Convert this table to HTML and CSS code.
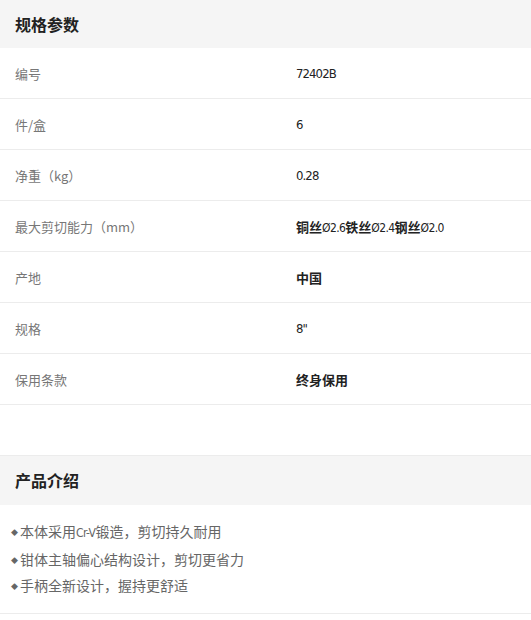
FILE: index.html
```html
<!DOCTYPE html>
<html lang="zh-CN">
<head>
    <meta charset="UTF-8">
    <meta name="viewport" content="width=device-width, initial-scale=1.0">
    <title>规格参数</title>
    <link rel="stylesheet" href="styles.css">
</head>
<body>
    <div class="section">
        <h3 class="section-title">规格参数</h3>
        <div class="spec-list">
            <div class="spec-row">
                <span class="spec-label">编号</span>
                <span class="spec-value num big">72402B</span>
            </div>
            <div class="spec-row">
                <span class="spec-label">件/盒</span>
                <span class="spec-value num big">6</span>
            </div>
            <div class="spec-row">
                <span class="spec-label">净重（kg）</span>
                <span class="spec-value num big">0.28</span>
            </div>
            <div class="spec-row">
                <span class="spec-label">最大剪切能力（mm）</span>
                <span class="spec-value strong">铜丝<span class="num">Ø2.6</span>铁丝<span class="num">Ø2.4</span>钢丝<span class="num">Ø2.0</span></span>
            </div>
            <div class="spec-row">
                <span class="spec-label">产地</span>
                <span class="spec-value strong">中国</span>
            </div>
            <div class="spec-row">
                <span class="spec-label">规格</span>
                <span class="spec-value num big">8"</span>
            </div>
            <div class="spec-row">
                <span class="spec-label">保用条款</span>
                <span class="spec-value strong">终身保用</span>
            </div>
        </div>
    </div>

    <div class="section intro">
        <h3 class="section-title">产品介绍</h3>
        <ul class="intro-list">
            <li>本体采用<span class="num">Cr-V</span>锻造，剪切持久耐用</li>
            <li>钳体主轴偏心结构设计，剪切更省力</li>
            <li>手柄全新设计，握持更舒适</li>
        </ul>
    </div>
</body>
</html>
```

FILE: styles.css
```css
body {
    margin: 0;
    font-family: 'Noto Sans CJK SC', 'Liberation Sans', sans-serif;
    background-color: #ffffff;
    color: #333;
    width: 531px;
}

.section-title {
    margin: 0;
    height: 48px;
    line-height: 48px;
    padding: 0 15px;
    background-color: #f5f5f5;
    font-size: 16px;
    font-weight: 700;
    color: #222;
}

.spec-row {
    display: flex;
    align-items: center;
    height: 50px;
    border-bottom: 1px solid #ececec;
    font-size: 13px;
}

.spec-label {
    width: 281px;
    padding-left: 15px;
    color: #777;
}

.spec-value {
    color: #222;
}

.spec-value.strong {
    font-weight: 700;
}

.num {
    font-family: 'DejaVu Sans', sans-serif;
    font-stretch: condensed;
    font-size: 12px;
    font-weight: 400;
    letter-spacing: -0.6px;
}

.num.big {
    font-size: 13px;
    letter-spacing: -0.9px;
}

.intro {
    margin-top: 50px;
    border-top: 1px solid #ececec;
    border-bottom: 1px solid #ececec;
}

.intro .section-title {
    height: 49px;
    line-height: 49px;
}

.intro-list {
    list-style: none;
    margin: 0;
    padding: 14px 0 13px 11px;
}

.intro-list li {
    font-size: 14px;
    line-height: 25.5px;
    color: #666;
}

.intro-list li::before {
    content: "◆";
    font-size: 7px;
    vertical-align: 2px;
    margin-right: 2px;
    color: #666;
}
```
